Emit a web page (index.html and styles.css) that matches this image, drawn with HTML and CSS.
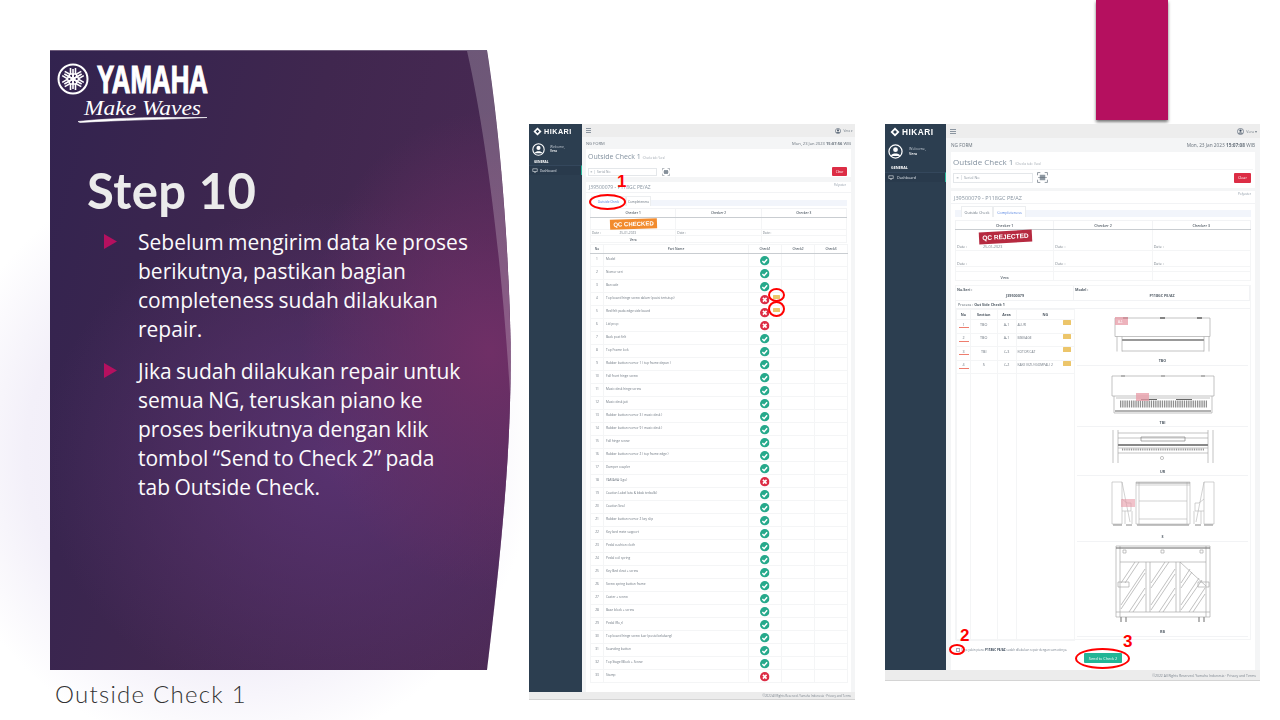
FILE: index.html
```html
<!DOCTYPE html>
<html lang="id">
<head>
<meta charset="utf-8">
<title>Step 10 - Outside Check 1</title>
<link rel="stylesheet" href="styles.css">
</head>
<body>
<svg class="defs" width="0" height="0" aria-hidden="true">
  <symbol id="ok" viewBox="0 0 20 20"><circle cx="10" cy="10" r="10" fill="#26a98b"/><path d="M5 10.5l3.6 3.6L15 7" fill="none" stroke="#fff" stroke-width="3.2"/></symbol>
  <symbol id="ng" viewBox="0 0 20 20"><circle cx="10" cy="10" r="10" fill="#dc2d45"/><path d="M6.2 6.2l7.6 7.6M13.8 6.2l-7.6 7.6" fill="none" stroke="#fff" stroke-width="3.4"/></symbol>
  <symbol id="diamond" viewBox="0 0 20 20"><path d="M10 1l9 9-9 9-9-9z M10 6l-4 4 4 4 4-4z" fill="#fff" fill-rule="evenodd"/></symbol>
  <symbol id="user" viewBox="0 0 24 24"><circle cx="12" cy="12" r="10.5" fill="none" stroke="currentColor" stroke-width="2"/><circle cx="12" cy="9" r="3.8" fill="currentColor"/><path d="M5 18c1.500-4 12.500-4 14 0v1H5z" fill="currentColor"/></symbol>
  <symbol id="monitor" viewBox="0 0 20 20"><path d="M1 3h18v11H1z" fill="none" stroke="#fff" stroke-width="2"/><path d="M6 17h8" stroke="#fff" stroke-width="2"/></symbol>
  <symbol id="qr" viewBox="0 0 20 20"><path d="M1 6V1h5M14 1h5v5M19 14v5h-5M6 19H1v-5" fill="none" stroke="#7d8790" stroke-width="1.500"/><path d="M5 5h10v10H5z" fill="#8f99a3"/><path d="M2 10h16" stroke="#5f6a75" stroke-width="1"/></symbol>
</svg>

<main class="slide">
  <div class="accent"></div>

  <section class="panel">
    <div class="panel-strip"></div>
    <svg class="logo" width="215" height="75" viewBox="0 0 215 75" aria-label="Yamaha Make Waves">
      <g transform="translate(23 24)" fill="none" stroke="#fff">
        <circle r="14.500" stroke-width="2"/>
        <g stroke-width="1.600"><path d="M0 10V-5M-2.500-11V-5H2.500V-11"/></g>
        <g transform="rotate(60)" stroke-width="1.600"><path d="M0 10V-5M-2.500-11V-5H2.500V-11"/></g>
        <g transform="rotate(120)" stroke-width="1.600"><path d="M0 10V-5M-2.500-11V-5H2.500V-11"/></g>
        <g transform="rotate(180)" stroke-width="1.600"><path d="M0 10V-5M-2.500-11V-5H2.500V-11"/></g>
        <g transform="rotate(240)" stroke-width="1.600"><path d="M0 10V-5M-2.500-11V-5H2.500V-11"/></g>
        <g transform="rotate(300)" stroke-width="1.600"><path d="M0 10V-5M-2.500-11V-5H2.500V-11"/></g>
      </g>
      <text class="logo-brand" x="47" y="37.500" textLength="111" lengthAdjust="spacingAndGlyphs">YAMAHA</text>
      <text class="logo-tag" x="34" y="60" textLength="117" lengthAdjust="spacingAndGlyphs">Make Waves</text>
      <path d="M28 66.500C70 62 115 62.500 157 62.500C115 64.500 70 65 30 67.500z" fill="#fff" stroke="#fff" stroke-width=".6"/>
    </svg>
    <h1 class="title">Step 10</h1>
    <ul class="points">
      <li>Sebelum mengirim data ke proses<br>berikutnya, pastikan bagian<br>completeness sudah dilakukan<br>repair.</li>
      <li>Jika sudah dilakukan repair untuk<br>semua NG, teruskan piano ke<br>proses berikutnya dengan klik<br>tombol “Send to Check 2” pada<br>tab Outside Check.</li>
    </ul>
  </section>

  <p class="caption">Outside Check 1</p>

  <!-- Left application screenshot -->
  <article class="shot shot-a">
    <aside class="side">
      <div class="brand"><svg class="brand-mark"><use href="#diamond"/></svg><span>HIKARI</span></div>
      <div class="who"><svg class="avatar"><use href="#user"/></svg><div class="who-text"><span>Welcome,</span><b>Vera</b></div></div>
      <div class="side-head">GENERAL</div>
      <div class="side-item"><svg class="mon"><use href="#monitor"/></svg><span>Dashboard</span></div>
    </aside>
    <div class="main">
      <header class="topbar"><span class="burger"></span><span class="me"><svg class="me-ico"><use href="#user"/></svg><span>Vera ▾</span></span></header>
      <div class="crumb"><span>NG FORM</span><span>Mon, 23 Jan 2023 <b>15:07:56</b> WIB</span></div>
      <section class="card card-search">
        <h2 class="page-title">Outside Check 1 <small>(Checks tab : Vera)</small></h2>
        <div class="search"><div class="input"><i>≡</i><span>Serial No</span></div><svg class="qr"><use href="#qr"/></svg><button class="clear">Clear</button></div>
      </section>
      <section class="card card-main">
        <div class="card-head"><span>J39500079 - P118GC PE/AZ</span><em>Polyester</em></div>
        <div class="tabs"><span class="tab tab-on">Outside Check</span><span class="tab">Completeness</span></div>
        <table class="checker">
          <tr class="r-head"><th>Checker 1</th><th>Checker 2</th><th>Checker 3</th></tr>
          <tr class="r-stamp"><td><span class="stamp stamp-ok">QC CHECKED</span></td><td></td><td></td></tr>
          <tr class="r-date"><td>Date : <span class="dv">25-01-2023</span></td><td>Date :</td><td>Date :</td></tr>
          <tr class="r-name"><td class="ctr">Vera</td><td></td><td></td></tr>
        </table>
        <table class="parts">
          <colgroup><col class="c-no"><col class="c-name"><col class="c-chk"><col class="c-chk"><col class="c-chk"></colgroup>
          <thead><tr><th>No</th><th>Part Name</th><th>Check1</th><th>Check2</th><th>Check3</th></tr></thead>
          <tbody>
            <tr><td>1</td><td>Model</td><td><svg class="st"><use href="#ok"/></svg></td><td></td><td></td></tr>
            <tr><td>2</td><td>Nomor seri</td><td><svg class="st"><use href="#ok"/></svg></td><td></td><td></td></tr>
            <tr><td>3</td><td>Barcode</td><td><svg class="st"><use href="#ok"/></svg></td><td></td><td></td></tr>
            <tr><td>4</td><td>Top board hinge screw dalam (posisi tertutup)</td><td><svg class="st"><use href="#ng"/></svg><span class="cam"></span></td><td></td><td></td></tr>
            <tr><td>5</td><td>Red felt pada edge side board</td><td><svg class="st"><use href="#ng"/></svg><span class="cam"></span></td><td></td><td></td></tr>
            <tr><td>6</td><td>Lid prop</td><td><svg class="st"><use href="#ng"/></svg></td><td></td><td></td></tr>
            <tr><td>7</td><td>Back post felt</td><td><svg class="st"><use href="#ok"/></svg></td><td></td><td></td></tr>
            <tr><td>8</td><td>Top Frame lock</td><td><svg class="st"><use href="#ok"/></svg></td><td></td><td></td></tr>
            <tr><td>9</td><td>Rubber button nomor 1 ( top frame depan )</td><td><svg class="st"><use href="#ok"/></svg></td><td></td><td></td></tr>
            <tr><td>10</td><td>Fall front hinge screw</td><td><svg class="st"><use href="#ok"/></svg></td><td></td><td></td></tr>
            <tr><td>11</td><td>Music desk hinge screw</td><td><svg class="st"><use href="#ok"/></svg></td><td></td><td></td></tr>
            <tr><td>12</td><td>Music desk jati</td><td><svg class="st"><use href="#ok"/></svg></td><td></td><td></td></tr>
            <tr><td>13</td><td>Rubber button nomor 3 ( music desk )</td><td><svg class="st"><use href="#ok"/></svg></td><td></td><td></td></tr>
            <tr><td>14</td><td>Rubber button nomor 9 ( music desk )</td><td><svg class="st"><use href="#ok"/></svg></td><td></td><td></td></tr>
            <tr><td>15</td><td>Fall hinge screw</td><td><svg class="st"><use href="#ok"/></svg></td><td></td><td></td></tr>
            <tr><td>16</td><td>Rubber button nomor 2 ( top frame edge )</td><td><svg class="st"><use href="#ok"/></svg></td><td></td><td></td></tr>
            <tr><td>17</td><td>Damper coupler</td><td><svg class="st"><use href="#ok"/></svg></td><td></td><td></td></tr>
            <tr><td>18</td><td>YAMAHA (Lgo)</td><td><svg class="st"><use href="#ng"/></svg></td><td></td><td></td></tr>
            <tr><td>19</td><td>Caution Label (ata &amp; bbak terbalik)</td><td><svg class="st"><use href="#ok"/></svg></td><td></td><td></td></tr>
            <tr><td>20</td><td>Caution Seal</td><td><svg class="st"><use href="#ok"/></svg></td><td></td><td></td></tr>
            <tr><td>21</td><td>Rubber button nomor 2 key slip</td><td><svg class="st"><use href="#ok"/></svg></td><td></td><td></td></tr>
            <tr><td>22</td><td>Key bed mete support</td><td><svg class="st"><use href="#ok"/></svg></td><td></td><td></td></tr>
            <tr><td>23</td><td>Pedal cushion cloth</td><td><svg class="st"><use href="#ok"/></svg></td><td></td><td></td></tr>
            <tr><td>24</td><td>Pedal coil spring</td><td><svg class="st"><use href="#ok"/></svg></td><td></td><td></td></tr>
            <tr><td>25</td><td>Key Bed cleat + screw</td><td><svg class="st"><use href="#ok"/></svg></td><td></td><td></td></tr>
            <tr><td>26</td><td>Screw spring button frame</td><td><svg class="st"><use href="#ok"/></svg></td><td></td><td></td></tr>
            <tr><td>27</td><td>Caster + screw</td><td><svg class="st"><use href="#ok"/></svg></td><td></td><td></td></tr>
            <tr><td>28</td><td>Base block + screw</td><td><svg class="st"><use href="#ok"/></svg></td><td></td><td></td></tr>
            <tr><td>29</td><td>Pedal (Ro,r)</td><td><svg class="st"><use href="#ok"/></svg></td><td></td><td></td></tr>
            <tr><td>30</td><td>Top board hinge screw luar (posisi belakang)</td><td><svg class="st"><use href="#ok"/></svg></td><td></td><td></td></tr>
            <tr><td>31</td><td>Sounding button</td><td><svg class="st"><use href="#ok"/></svg></td><td></td><td></td></tr>
            <tr><td>32</td><td>Top Stagel Block + Screw</td><td><svg class="st"><use href="#ok"/></svg></td><td></td><td></td></tr>
            <tr><td>33</td><td>Stamp</td><td><svg class="st"><use href="#ng"/></svg></td><td></td><td></td></tr>
          </tbody>
        </table>
      </section>
    </div>
    <footer class="foot">©2022 All Rights Reserved. Yamaha Indonesia · Privacy and Terms</footer>
  </article>

  <!-- Right application screenshot -->
  <article class="shot shot-b">
    <aside class="side">
      <div class="brand"><svg class="brand-mark"><use href="#diamond"/></svg><span>HIKARI</span></div>
      <div class="who"><svg class="avatar"><use href="#user"/></svg><div class="who-text"><span>Welcome,</span><b>Vera</b></div></div>
      <div class="side-head">GENERAL</div>
      <div class="side-item"><svg class="mon"><use href="#monitor"/></svg><span>Dashboard</span></div>
    </aside>
    <div class="main">
      <header class="topbar"><span class="burger"></span><span class="me"><svg class="me-ico"><use href="#user"/></svg><span>Vera ▾</span></span></header>
      <div class="crumb"><span>NG FORM</span><span>Mon, 23 Jan 2023 <b>15:07:08</b> WIB</span></div>
      <section class="card card-search">
        <h2 class="page-title">Outside Check 1 <small>(Checks tab : Vera)</small></h2>
        <div class="search"><div class="input"><i>≡</i><span>Serial No</span></div><svg class="qr"><use href="#qr"/></svg><button class="clear">Clear</button></div>
      </section>
      <section class="card card-main">
        <div class="card-head"><span>J39500079 - P118GC PE/AZ</span><em>Polyester</em></div>
        <div class="tabs"><span class="tab">Outside Check</span><span class="tab tab-on">Completeness</span></div>
        <table class="checker">
          <tr class="r-head"><th>Checker 1</th><th>Checker 2</th><th>Checker 3</th></tr>
          <tr class="r-stamp"><td><span class="stamp stamp-ng">QC REJECTED</span>Date : <span class="dv">25-01-2023</span></td><td>Date :</td><td>Date :</td></tr>
          <tr class="r-date"><td>Date :</td><td>Date :</td><td>Date :</td></tr>
          <tr class="r-gap"><td></td><td></td><td></td></tr>
          <tr class="r-name"><td class="ctr">Vera</td><td></td><td></td></tr>
        </table>
        <div class="sheet">
          <div class="info">
            <div><b>No.Seri :</b><p>J39500079</p></div>
            <div><b>Model :</b><p>P118GC PE/AZ</p></div>
          </div>
          <div class="process">Process : <b>Out Side Check 1</b></div>
          <div class="split">
            <table class="defects">
              <colgroup><col class="d-no"><col class="d-sec"><col class="d-area"><col class="d-ng"></colgroup>
              <thead><tr><th>No</th><th>Section</th><th>Area</th><th>NG</th></tr></thead>
              <tbody>
                <tr><td class="mark">1</td><td>TBO</td><td>A-1</td><td>ALUR<span class="cam"></span></td></tr>
                <tr><td class="mark">2</td><td>TBO</td><td>A-1</td><td>BISIKAGE<span class="cam"></span></td></tr>
                <tr><td class="mark">3</td><td>TBI</td><td>C-3</td><td>KOTOR CAT<span class="cam"></span></td></tr>
                <tr><td class="mark">4</td><td>S</td><td>C-2</td><td>KAKE IKZU (GOMPAL) 2<span class="cam"></span></td></tr>
                <tr class="filler"><td></td><td></td><td></td><td></td></tr>
              </tbody>
            </table>
            <div class="views">
              <figure class="view v-tbo">
                <svg width="98" height="36" viewBox="0 0 98 36">
                  <g fill="none" stroke="#aaa" stroke-width=".7">
                    <path d="M1 1h95v18.500H1zM3 19.500v15M8 19.500v15M90 19.500v15M95 19.500v15M8 23h82M8 34h82"/>
                    <path d="M8 23h82" stroke="#999" stroke-width="2"/>
                    <path d="M9 1h5M46 1h5M83 1h5" stroke="#666" stroke-width="1.500"/>
                  </g>
                  <rect x="1" y="0" width="13" height="8" fill="#e79aa6" fill-opacity=".75"/><text class="pin" x="4" y="5.500">A-1</text>
                </svg>
                <figcaption>TBO</figcaption>
              </figure>
              <figure class="view v-tbi">
                <svg width="104" height="39" viewBox="0 0 104 39">
                  <g fill="none" stroke="#aaa" stroke-width=".7">
                    <path d="M1 1h102v20H1zM3 21v17h98V21M5 23h94"/>
                    <path d="M9 29h87" stroke="#8f8f8f" stroke-width="7" stroke-dasharray="1.300 .9"/>
                    <path d="M4 36h96" stroke="#999" stroke-width="1.500"/>
                    <path d="M10 1h4M50 1h4M90 1h4" stroke="#888" stroke-width="1.200"/>
                    <path d="M30 24.500h16M65 24.500h16" stroke="#666" stroke-width="1"/>
                  </g>
                  <rect x="25" y="18" width="13" height="8" fill="#e79aa6" fill-opacity=".75"/>
                </svg>
                <figcaption>TBI</figcaption>
              </figure>
              <figure class="view v-ur">
                <svg width="104" height="34" viewBox="0 0 104 34">
                  <g fill="none" stroke="#aaa" stroke-width=".7">
                    <path d="M2 0v33M7 0v33M97 0v33M102 0v33M7 3h90M7 8h90M7 18h90M7 23h90"/>
                    <path d="M30 7h44v4H30z" stroke="#888"/>
                    <path d="M7 15h90" stroke="#888" stroke-width="1.800"/>
                    <path d="M11 19.500h82" stroke="#999" stroke-width="2.200" stroke-dasharray="1 .8"/>
                    <circle cx="51" cy="28" r="1.600"/>
                  </g>
                </svg>
                <figcaption>UR</figcaption>
              </figure>
              <figure class="view v-s">
                <svg width="106" height="46" viewBox="0 0 106 46">
                  <g fill="none" stroke="#b4b4b4" stroke-width=".6">
                    <path d="M2 1h10v42H2zM12 1l8 40M12 18l5 4h4v8h-9M15 30v13M22 30v13"/>
                    <path d="M104 1H94v42h10zM94 1l-8 40M94 18l-5 4h-4v8h9M91 30v13M84 30v13"/>
                    <path d="M26 1h54v42H26zM29 1v42M77 1v42M26 4h54M29 20h48M29 38h48"/>
                    <path d="M26 2h54" stroke="#999" stroke-width="1.200"/>
                    <path d="M3 44h9M16 44h6M27 44h52M85 44h6M94 44h9" stroke="#888" stroke-width="1"/>
                  </g>
                  <rect x="11" y="18" width="14" height="8" fill="#e79aa6" fill-opacity=".6"/>
                </svg>
                <figcaption>S</figcaption>
              </figure>
              <figure class="view v-rb">
                <svg width="98" height="78" viewBox="0 0 98 78">
                  <g fill="none" stroke="#a6a6a6" stroke-width=".7">
                    <path d="M7 38L21 17M11 38L25 17M7 60L31 24M7 64L31 28M15 67L31 43M19 67L31 49"/>
                    <path d="M37 38L51 17M37 43L55 17M37 60L61 24M37 65L61 29M45 67L61 43M49 67L61 49"/>
                    <path d="M67 38L76 24M67 43L78 27M67 60L85 33M67 65L88 35M75 67L91 43M79 67L91 49"/>
                  </g>
                  <g fill="none" stroke="#aaa" stroke-width=".7">
                    <path d="M2 1h94v71H2zM6 17h86M6 1v71M92 1v71M2 67h94M32 17v50M36 17v50M62 17v50M66 17v50M66 17l26 24"/>
                    <path d="M2 3h94" stroke="#666" stroke-width="1"/>
                    <path d="M9 5h3v3H9zM47 5h3v3h-3zM86 5h3v3h-3zM4 37h11v5H4zM84 37h11v5H84z"/>
                    <path d="M7 72v5M12 72v5M85 72v5M90 72v5" stroke="#888" stroke-width="1.200"/>
                  </g>
                </svg>
                <figcaption>RB</figcaption>
              </figure>
            </div>
          </div>
        </div>
        <div class="confirm"><span class="box"></span><span>Saya yakin piano <b>P118GC PE/AZ</b> sudah dilakukan repair dengan semestinya.</span></div>
        <button class="send">Send to Check 2</button>
      </section>
    </div>
    <footer class="foot">©2022 All Rights Reserved. Yamaha Indonesia · Privacy and Terms</footer>
  </article>

  <!-- Red annotations drawn over the screenshots -->
  <span class="ring ring-tab"></span>
  <span class="ring ring-cam1"></span>
  <span class="ring ring-cam2"></span>
  <span class="ring ring-box"></span>
  <span class="ring ring-send"></span>
  <span class="num num-1">1</span>
  <span class="num num-2">2</span>
  <span class="num num-3">3</span>
</main>
</body>
</html>
```
FILE: styles.css
```css
* { box-sizing: border-box; }
html, body { margin: 0; padding: 0; background: #fff; }
.defs { position: absolute; }

.slide {
  position: relative;
  width: 1280px;
  height: 720px;
  overflow: hidden;
  background: radial-gradient(circle 300px at 235px 455px, #ebe6f5 0%, #f3f0f9 70%, #ffffff 100%);
  font-family: "Open Sans", "Liberation Sans", sans-serif;
}

.accent {
  position: absolute;
  left: 1096px;
  top: 0;
  width: 72px;
  height: 120px;
  background: #b5105f;
  box-shadow: 0 2px 3px rgba(0,0,0,.55);
}

/* Left purple panel */
.panel {
  position: absolute;
  left: 50px;
  top: 50px;
  width: 462px;
  height: 620px;
  color: #fff;
  clip-path: path("M0 0H437C448 70 457 170 460 270C463 370 455 470 437 620H0Z");
  border-top: 1px solid #6f5d7c;
  background:
    radial-gradient(ellipse 190px 240px at 440px 300px, #6f2f66 0%, rgba(111,47,102,0) 100%),
    radial-gradient(ellipse 300px 260px at 290px 410px, #583270 0%, rgba(88,50,112,0) 100%),
    linear-gradient(105deg, #32234f 0%, #40274f 45%, #4d2a55 100%);
}
.panel-strip {
  position: absolute;
  inset: 0;
  background: rgba(255,255,255,.22);
  clip-path: path("M417 0H437C448 70 457 170 460 270C461 300 462 330 461 360C455 250 440 100 417 0Z");
}
.logo { display: block; margin: 4px 0 0 0; position: relative; }
.logo-brand {
  font-family: "Liberation Sans", sans-serif;
  font-weight: 700;
  font-size: 39px;
  fill: #fff;
  stroke: #fff;
  stroke-width: 1.2px;
}
.logo-tag {
  font-family: "Liberation Serif", serif;
  font-style: italic;
  font-size: 21px;
  fill: #fff;
}
.title {
  margin: 30px 0 0 37px;
  font-family: "Lato", "Liberation Sans", sans-serif;
  font-weight: 700;
  font-size: 49px;
  line-height: 60px;
  letter-spacing: .4px;
  color: #ebebeb;
}
.points { list-style: none; margin: 8px 0 0 88px; padding: 0; }
.points li {
  position: relative;
  font-size: 21px;
  line-height: 29px;
  white-space: nowrap;
  margin-bottom: 13px;
  word-spacing: -1px;
  color: #fbfafc;
}
.points li::before {
  content: "";
  position: absolute;
  left: -34px;
  top: 6px;
  width: 13px;
  height: 15px;
  background: #b5105f;
  clip-path: polygon(0 0, 100% 50%, 0 100%);
}

.caption {
  position: absolute;
  left: 55px;
  top: 679px;
  margin: 0;
  font-family: "Lato", sans-serif;
  font-weight: 300;
  font-size: 24px;
  line-height: 30px;
  letter-spacing: 1.250px;
  color: #333;
}

/* Application screenshots */
.shot {
  position: absolute;
  display: grid;
  background: #f4f5f6;
  color: #5c6670;
  font-family: "Open Sans", "Liberation Sans", sans-serif;
  filter: blur(.5px);
  overflow: hidden;
}
.shot-a { left: 529px; top: 124px; width: 326px; height: 576px; grid-template-columns: 53px 1fr; grid-template-rows: 568px 8px; font-size: 3.2px; }
.shot-b { left: 885px; top: 124px; width: 375px; height: 557px; grid-template-columns: 61px 1fr; grid-template-rows: 546px 11px; font-size: 3.7px; }

.side { background: #2c3e50; color: #dfe4ea; display: flex; flex-direction: column; }
.brand { display: flex; align-items: center; font-weight: 700; color: #fff; font-family: "Liberation Sans", sans-serif; letter-spacing: .5px; }
.who { display: flex; align-items: center; color: #c5ccd4; }
.who-text { display: flex; flex-direction: column; }
.who-text b { font-weight: 600; color: #fff; }
.avatar { color: #fff; }
.side-head { font-weight: 700; color: #fff; }
.side-item { display: flex; align-items: center; background: #293a4c; border-top: .5px solid #34475c; border-right: 1px solid #26b99a; }

.shot-a .brand { height: 14px; padding-left: 4px; gap: 2px; font-size: 7.200px; }
.shot-a .brand-mark { width: 9px; height: 9px; }
.shot-a .who { height: 18px; margin-top: 2px; padding-left: 3px; gap: 5px; }
.shot-a .avatar { width: 13px; height: 13px; }
.shot-a .side-head { padding: 3px 0 0 5px; height: 7px; line-height: 3px; }
.shot-a .side-item { height: 10px; margin-top: 0; padding-left: 3px; gap: 2px; }
.shot-a .mon { width: 6px; height: 5px; }

.shot-b .brand { height: 16px; padding-left: 5px; gap: 2px; font-size: 8.300px; }
.shot-b .brand-mark { width: 10px; height: 10px; }
.shot-b .who { height: 18px; margin-top: 2px; padding-left: 3px; gap: 6px; }
.shot-b .avatar { width: 15px; height: 15px; }
.shot-b .side-head { padding: 5.500px 0 0 6px; height: 12px; line-height: 3px; }
.shot-b .side-item { height: 10px; padding-left: 3px; gap: 3px; }
.shot-b .mon { width: 6px; height: 5px; }

.main { display: flex; flex-direction: column; min-width: 0; }
.topbar { display: flex; justify-content: space-between; align-items: center; background: #ededed; }
.burger { display: block; height: 5px; border-top: 1px solid #8b95a0; border-bottom: 1px solid #8b95a0; position: relative; }
.burger::after { content: ""; position: absolute; left: 0; right: 0; top: 1px; border-top: 1px solid #8b95a0; }
.me { display: flex; align-items: center; gap: 2px; color: #76808a; }
.me-ico { color: #3c4c5f; }
.crumb { display: flex; justify-content: space-between; align-items: center; color: #68727c; }
.card { background: #fff; }
.page-title { margin: 0; font-weight: 400; color: #8492a0; }
.page-title small { color: #a0a8b0; }
.search { display: flex; align-items: center; }
.input { display: flex; align-items: center; border: .5px solid #e4e7ea; color: #8c96a0; }
.input i { font-style: normal; border-right: .5px solid #e4e7ea; text-align: center; }
.clear { margin-left: auto; padding: 0; border: 0; border-radius: 1px; background: #dc2d45; color: #fff; font: inherit; }
.card-head { display: flex; justify-content: space-between; border-bottom: .5px solid #f2f3f5; color: #8794a1; }
.card-head em { font-style: normal; color: #8a96a3; }
.tabs { display: flex; }
.tab { display: flex; align-items: center; justify-content: center; color: #6a7580; }
.tab-on { color: #4f7fe0; }

table { border-collapse: collapse; table-layout: fixed; }
.checker, .parts { width: 100%; }
.checker th { font-weight: 600; color: #56606a; border: .5px solid #f2f3f5; border-bottom: 1px solid #c9cdd1; padding: 0; }
.checker td { border: .5px solid #f4f5f6; padding: 0 0 0 1px; color: #7a838c; vertical-align: bottom; position: relative; }
.checker .ctr { text-align: center; font-weight: 600; color: #58626c; padding: 0; }
.dv { display: inline-block; }
.stamp {
  position: absolute;
  display: block;
  color: #fff;
  text-align: center;
  font-family: "Liberation Sans", sans-serif;
  font-weight: 700;
  white-space: nowrap;
}
.stamp-ok { background: #f28b2d; transform: rotate(-2deg); }
.stamp-ng { background: #b62a40; transform: rotate(-3deg); }

.parts th { font-weight: 600; color: #56606a; border: .5px solid #f4f5f6; border-bottom: 1px solid #c9cdd1; padding: 0; text-align: center; }
.parts td { border: .5px solid #f4f5f6; padding: 2.500px 0 0 2px; vertical-align: top; color: #6f7882; line-height: 4px; position: relative; }
.parts td:first-child { text-align: center; padding-left: 0; }
.parts td:nth-child(3) { padding: 0; text-align: center; vertical-align: middle; }
.st { display: block; margin: 1.700px auto 0; width: 9.500px; height: 9.500px; }
.cam { position: absolute; display: block; background: #ecc56a; border-radius: .5px; }

/* Left shot sizes */
.shot-a .topbar { height: 13px; padding: 0 2px 0 4px; }
.shot-a .burger { width: 5px; }
.shot-a .me-ico { width: 6px; height: 6px; }
.shot-a .crumb { height: 12px; padding: 0 4px; font-size: 4.100px; }
.shot-a .card { margin: 0 4px 0 4px; }
.shot-a .card-search { height: 28px; margin-bottom: 5px; padding: 3px 2px; }
.shot-a .page-title { font-size: 7px; line-height: 10px; }
.shot-a .page-title small { font-size: 2.600px; }
.shot-a .search { margin-top: 4px; }
.shot-a .input { width: 69px; height: 8px; }
.shot-a .input i { width: 6px; margin-right: 2px; }
.shot-a .qr { width: 8px; height: 8px; margin-left: 5px; }
.shot-a .clear { width: 15px; height: 9px; margin-right: 2px; font-size: 3.200px; }
.shot-a .card-main { height: 510px; padding: 0 4px; }
.shot-a .card-head { height: 11px; margin: 0 -4px; padding: 1px 5px 0 3px; font-size: 5px; line-height: 9px; }
.shot-a .card-head em { font-size: 2.800px; line-height: 5px; }
.shot-a .tabs { margin: 3px 0 2px; border-bottom: 6px solid #f2f5fb; height: 10px; }
.shot-a .tab { height: 10px; background: #fff; border: .5px solid #eceef0; border-bottom: 0; }
.shot-a .tab:first-child { width: 35px; margin-left: 1px; }
.shot-a .tab:last-child { width: 25px; }
.shot-a .checker { margin-bottom: 1px; }
.shot-a .r-head { height: 9px; }
.shot-a .r-stamp { height: 12px; }
.shot-a .r-date { height: 6px; }
.shot-a .r-name { height: 7px; }
.shot-a .stamp { left: 19px; top: .500px; width: 47px; height: 10px; font-size: 6px; line-height: 10px; }
.shot-a .dv { margin-left: 18px; }
.shot-a .parts thead tr { height: 9px; }
.shot-a .parts tbody tr { height: 13px; }
.shot-a .c-no { width: 13px; }
.shot-a .c-name { width: 145px; }
.shot-a .c-chk { width: 33px; }
.shot-a .parts .cam { left: 24px; top: 1.500px; width: 7px; height: 4.500px; }
.shot-a .foot { font-size: 2.900px; }

/* Right shot sizes */
.shot-b .topbar { height: 14px; padding: 0 3px 0 4px; }
.shot-b .burger { width: 6px; }
.shot-b .me-ico { width: 7px; height: 7px; }
.shot-b .crumb { height: 14px; padding: 0 5px; font-size: 4.750px; }
.shot-b .card { margin: 0 5px; }
.shot-b .card-search { height: 36px; margin-bottom: 3px; padding: 3px 2px; }
.shot-b .page-title { font-size: 8px; line-height: 13px; height: 15px; border-bottom: .5px solid #f4f5f6; }
.shot-b .page-title small { font-size: 3px; }
.shot-b .search { margin-top: 2px; }
.shot-b .input { width: 80px; height: 10px; }
.shot-b .input i { width: 8px; margin-right: 2px; }
.shot-b .qr { width: 11px; height: 11px; margin-left: 4px; }
.shot-b .clear { width: 17px; height: 10px; margin-right: 2px; font-size: 3.700px; }
.shot-b .card-main { height: 479px; padding: 0 4px; }
.shot-b .card-head { height: 13px; margin: 0 -4px; padding: 1px 4px 0 3px; font-size: 5.500px; line-height: 12px; }
.shot-b .card-head em { font-size: 3px; line-height: 5px; }
.shot-b .tabs { margin: 2px 0 3px; height: 11px; border-bottom: 7px solid #f2f5fb; }
.shot-b .tab { height: 11px; background: #fff; border: .5px solid #eceef0; border-bottom: 0; }
.shot-b .tab:first-child { width: 32px; margin-left: 6px; }
.shot-b .tab:last-child { width: 33px; }
.shot-b .checker { margin-bottom: 4px; }
.shot-b .r-head { height: 9px; }
.shot-b .r-stamp { height: 21px; }
.shot-b .r-date { height: 16px; }
.shot-b .r-gap { height: 5px; }
.shot-b .r-name { height: 9px; }
.shot-b .checker .r-stamp td { padding-bottom: 1px; }
.shot-b .stamp { left: 23px; top: 1px; width: 53px; height: 12px; font-size: 6.500px; line-height: 12px; }
.shot-b .dv { margin-left: 15px; }
.shot-b .foot { font-size: 3.400px; }

/* Repair sheet in right shot */
.sheet { border: .5px solid #f4f5f6; height: 355px; display: flex; flex-direction: column; }
.info { display: grid; grid-template-columns: 118px 1fr; height: 15px; border-bottom: .5px solid #f2f3f5; color: #56606a; }
.info > div { padding: 1px 0 0 1px; border-right: .5px solid #f2f3f5; }
.info b { font-weight: 700; display: block; line-height: 6px; }
.info p { margin: 0; text-align: center; font-weight: 700; line-height: 6px; }
.process { height: 8px; line-height: 8px; padding-left: 2px; color: #55606a; border-bottom: .5px solid #f2f3f5; }
.split { display: flex; flex: 1; min-height: 0; }
.defects { width: 118px; height: 332px; flex: none; }
.d-no { width: 14px; }
.d-sec { width: 26.500px; }
.d-area { width: 19px; }
.d-ng { width: 58.500px; }
.defects th { height: 10px; padding: 0; font-weight: 700; color: #4f5963; border: .5px solid #f4f5f6; }
.defects td { height: 13.500px; border: .5px solid #f4f5f6; text-align: center; vertical-align: top; padding: 1.500px 0 0; color: #6e7780; position: relative; line-height: 5px; }
.defects td:last-child { text-align: left; padding-left: 1px; white-space: nowrap; font-size: 3.300px; }
.defects .cam { right: 3px; top: 0; width: 8px; height: 5px; }
.defects .filler td { height: auto; }
.mark::after { content: ""; position: absolute; left: 1.500px; right: 1px; top: 7px; height: 1px; background: #ee7d6e; }
.views { flex: 1; display: flex; flex-direction: column; min-width: 0; padding: 0 2px; }
.view { margin: 0; display: flex; flex-direction: column; align-items: center; border-bottom: .5px solid #f2f3f5; }
.view svg { display: block; overflow: visible; flex: none; }
.view figcaption { font-weight: 700; color: #56606a; line-height: 5px; }
.v-tbo { height: 57px; padding-top: 8px; }
.v-tbo figcaption { margin-top: 5px; }
.v-tbi { height: 61px; padding-top: 9px; }
.v-tbi figcaption { margin-top: 6px; }
.v-ur { height: 49px; padding-top: 3px; }
.v-ur figcaption { margin-top: 4.500px; }
.v-s { height: 66px; padding-top: 5px; }
.v-s figcaption { margin-top: 6.500px; }
.v-rb { height: 95px; padding-top: 3px; }
.v-rb figcaption { margin-top: 5.500px; }
.pin { font-size: 3px; fill: #fff; font-family: "Liberation Sans", sans-serif; }

.confirm { display: flex; align-items: center; gap: 1px; height: 5px; margin: 7px 0 0 1px; color: #7a8490; white-space: nowrap; font-size: 3px; }
.confirm b { color: #3c4a5a; }
.box { display: block; width: 4px; height: 4px; border: .5px solid #aab; background: #fff; }
.send { display: block; width: 38px; height: 10px; margin: 0 auto; padding: 0; border: 0; border-radius: 1px; background: #22b596; color: #fff; font: inherit; font-size: 3.800px; position: relative; top: 1px; }

.foot { grid-column: 1 / -1; display: flex; align-items: center; justify-content: flex-end; padding-right: 4px; background: #ececec; color: #7d868f; border-bottom: 1px solid #d4d4d4; }

/* Red call-outs */
.ring { position: absolute; border: 2px solid #f00; border-radius: 50%; }
.ring-tab { left: 589px; top: 194px; width: 37px; height: 16px; }
.ring-cam1 { left: 768px; top: 288px; width: 17px; height: 14px; }
.ring-cam2 { left: 768px; top: 301px; width: 17px; height: 16px; }
.ring-box { left: 949px; top: 644px; width: 16px; height: 11px; }
.ring-send { left: 1075px; top: 648px; width: 55px; height: 21px; }
.num { position: absolute; color: #f00; font-family: "Liberation Sans", sans-serif; font-weight: 700; font-size: 17px; line-height: 17px; }
.num-1 { left: 617px; top: 173px; }
.num-2 { left: 960px; top: 627px; }
.num-3 { left: 1123px; top: 633px; }
```
